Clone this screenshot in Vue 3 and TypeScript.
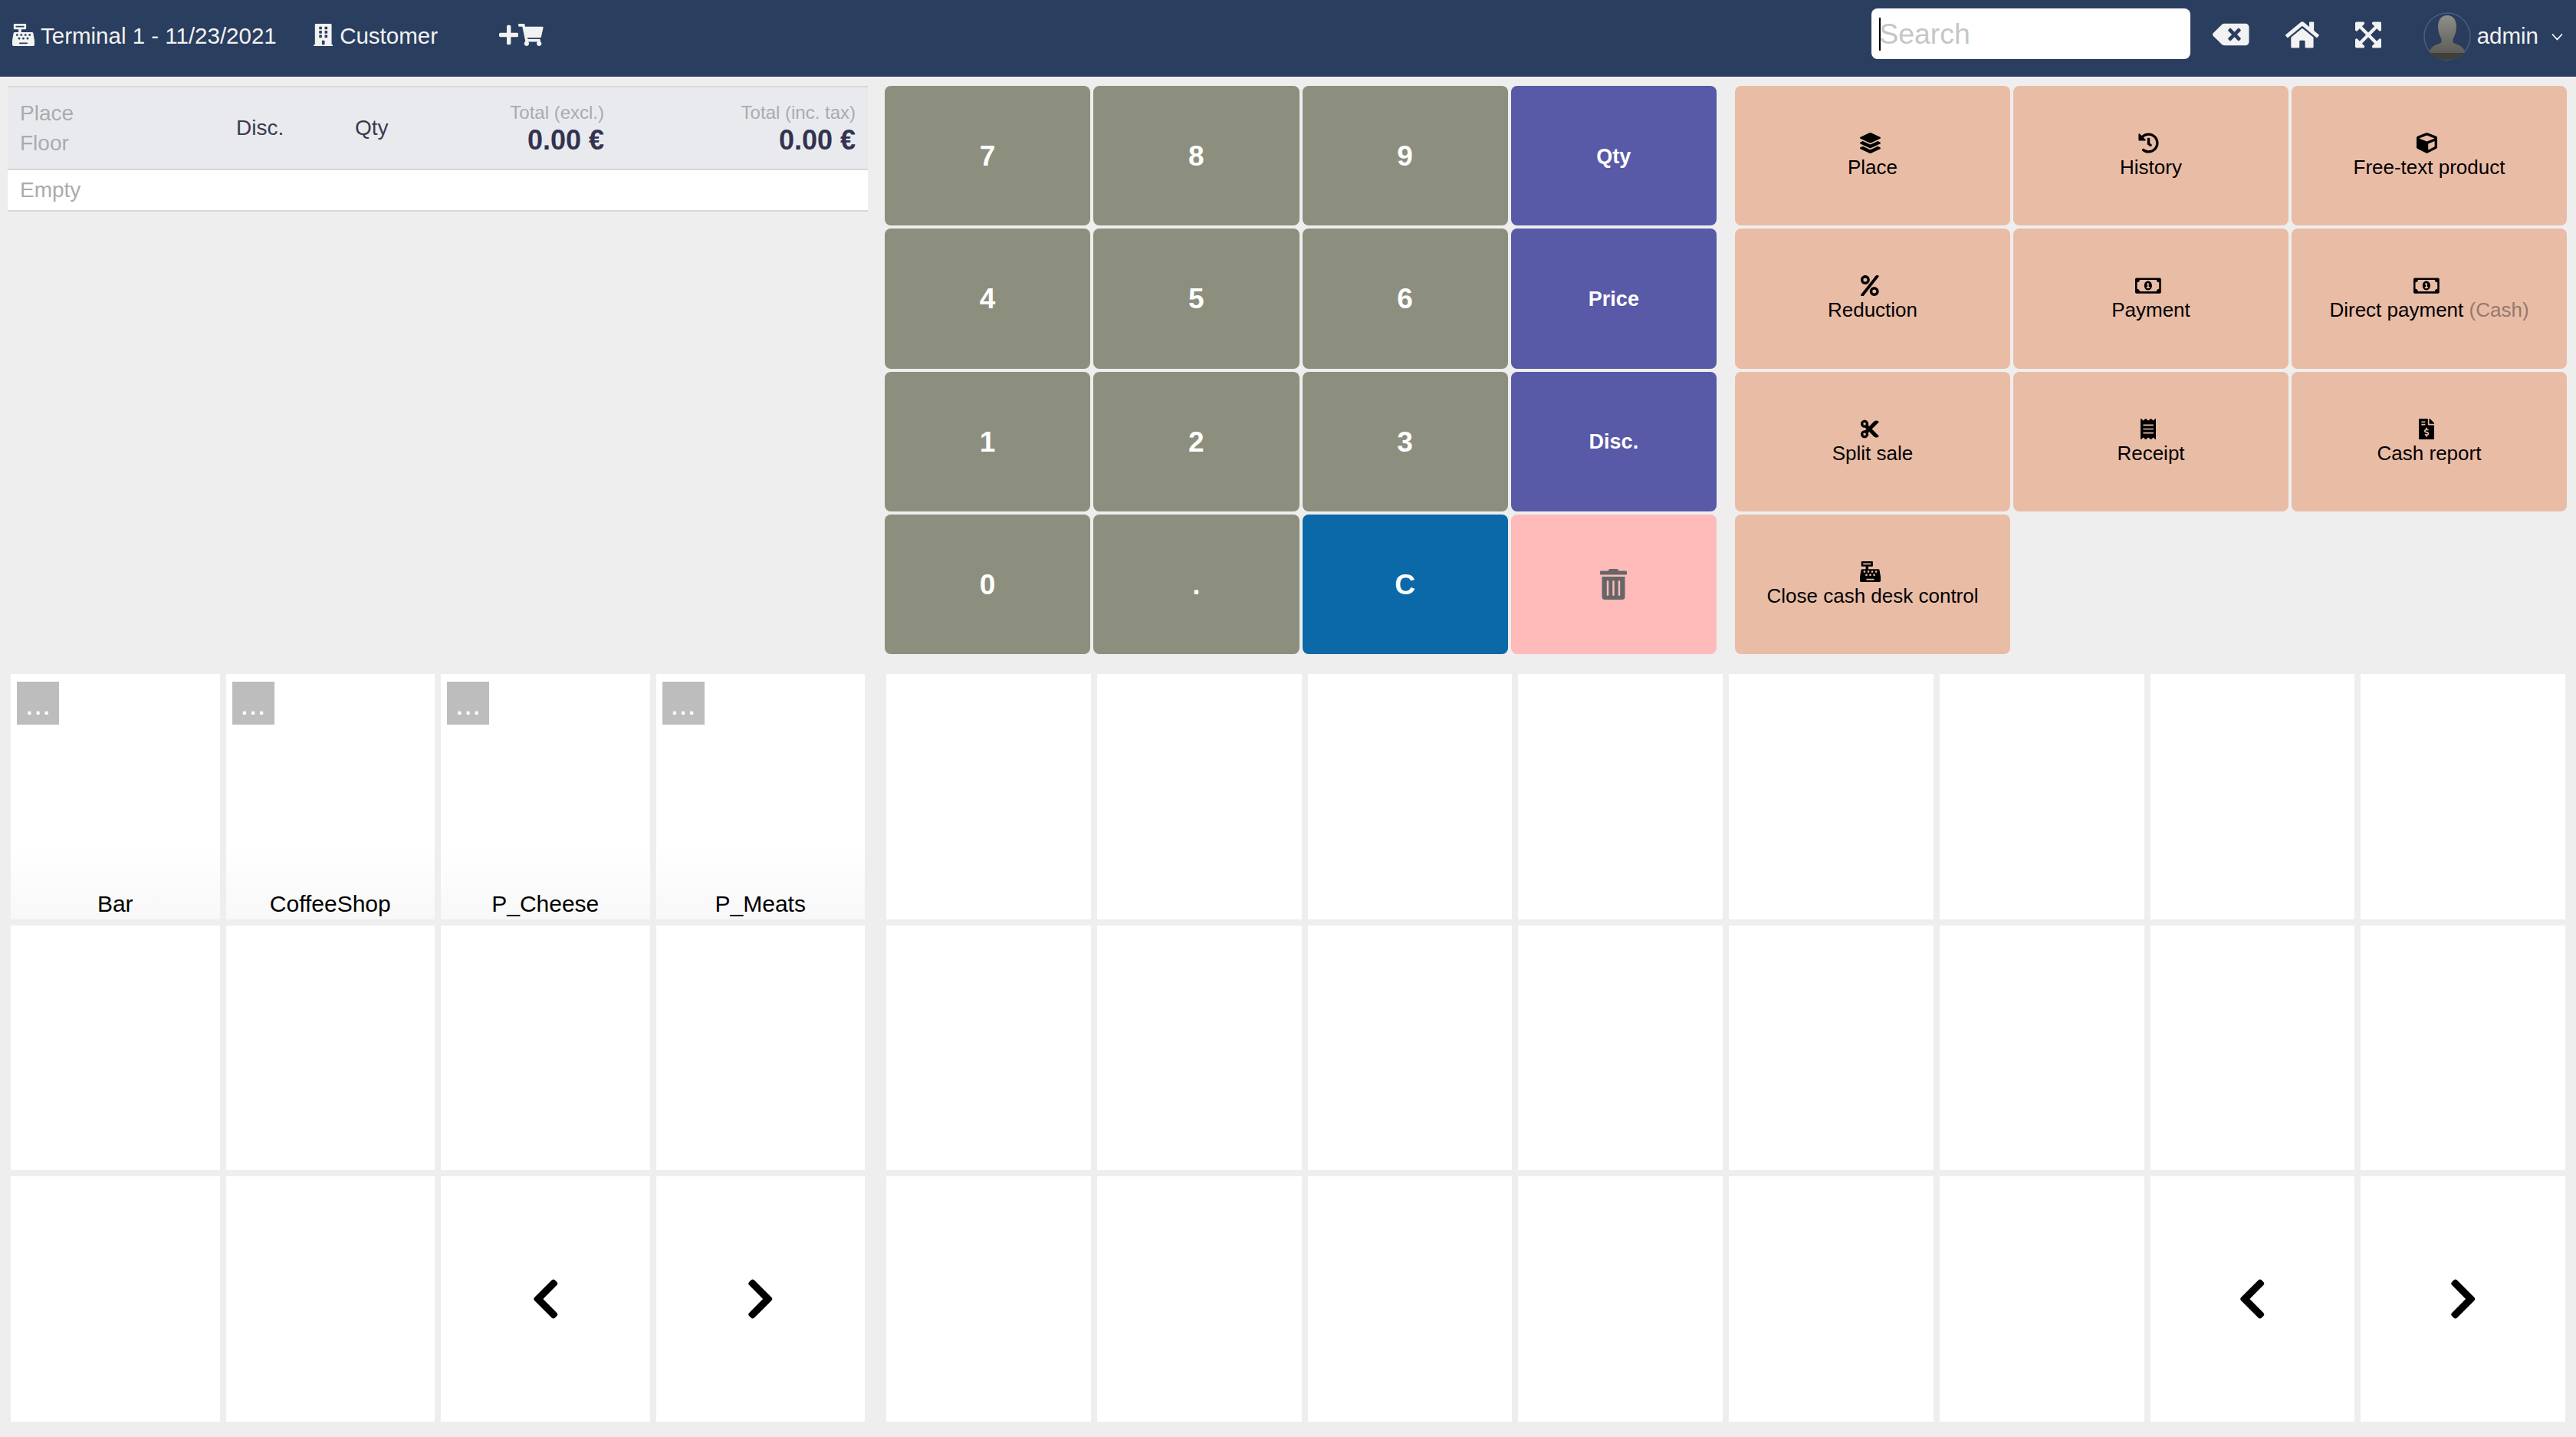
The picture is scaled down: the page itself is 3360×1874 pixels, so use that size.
<template>
  <div class="pos">
    <header class="topbar">
      <div class="crumb first">
        <svg class="i ic" :viewBox="icons.register.vb"><path :d="icons.register.d" /></svg>
        <span>Terminal 1 - 11/23/2021</span>
      </div>
      <div class="crumb customer">
        <svg class="i ic" :viewBox="icons.building.vb"><path :d="icons.building.d" /></svg>
        <span>Customer</span>
      </div>
      <div class="crumb newsale">
        <svg class="i ic" :viewBox="icons.plus.vb"><path :d="icons.plus.d" /></svg>
        <svg class="i ic" :viewBox="icons.cart.vb"><path :d="icons.cart.d" /></svg>
      </div>
      <div class="search">
        <input type="text" placeholder="Search" />
        <span class="caret"></span>
      </div>
      <svg class="i tool backspace" :viewBox="icons.backspace.vb"><path :d="icons.backspace.d" /></svg>
      <svg class="i tool home" :viewBox="icons.home.vb"><path :d="icons.home.d" /></svg>
      <svg class="i tool expand" :viewBox="icons.expand.vb"><path :d="icons.expand.d" /></svg>
      <svg class="avatar" viewBox="0 0 62 63">
        <defs>
          <linearGradient id="headfill" x1="0" y1="0" x2="0" y2="1">
            <stop offset="0" stop-color="#8e8e8a" />
            <stop offset="1" stop-color="#55554f" />
          </linearGradient>
        </defs>
        <ellipse cx="31" cy="31.5" rx="30" ry="30.5" fill="#2b3d5c" stroke="#4b5e7c" stroke-width="1.5" />
        <path d="M8 52c1-6 6-9 13-11 3-1 3-4 2-7-2-4-4-9-4-15 0-10 5-15 12-15s12 5 12 15c0 6-2 11-4 15-1 3-1 6 2 7 7 2 12 5 13 11-5 6-13 10-23 10S13 58 8 52z" fill="url(#headfill)" />
        <path d="M8 53h46c-5 6-13 9-23 9S13 59 8 53z" fill="#3f3f3b" />
      </svg>
      <span class="user">admin</span>
      <svg class="userchev" viewBox="0 0 15 10"><path d="M1 1.5l6.5 7 6.5-7" fill="none" stroke="#fff" stroke-width="1.8" /></svg>
    </header>

    <section class="upper">
      <div class="ticket">
        <div class="ticket-head">
          <div class="place"><div>Place</div><div>Floor</div></div>
          <div class="cell">Disc.</div>
          <div class="cell">Qty</div>
          <div class="total"><div class="total-label">Total (excl.)</div><div class="total-value">0.00 €</div></div>
          <div class="total"><div class="total-label">Total (inc. tax)</div><div class="total-value">0.00 €</div></div>
        </div>
        <div class="ticket-empty">Empty</div>
      </div>

      <div class="numpad">
        <button v-for="k in keys" :key="k.label" :class="['key', k.kind]">
          <svg v-if="k.kind === 'del'" class="i" :viewBox="icons.trash.vb"><path :d="icons.trash.d" /></svg>
          <template v-else>{{ k.label }}</template>
        </button>
      </div>

      <div class="actions">
        <button v-for="a in actions" :key="a.label" class="action">
          <svg class="i" :viewBox="icons[a.icon].vb"><path :d="icons[a.icon].d" /></svg>
          <span>{{ a.label }}<em v-if="a.note">{{ ' ' + a.note }}</em></span>
        </button>
      </div>
    </section>

    <section class="lower">
      <div class="tiles cats">
        <div v-for="(c, idx) in catTiles" :key="idx" :class="['tile', { named: c.name }]">
          <span v-if="c.name" class="more">...</span>
          <span v-if="c.name" class="tile-name">{{ c.name }}</span>
          <svg v-if="c.arrow" class="i chev" :viewBox="icons[c.arrow].vb"><path :d="icons[c.arrow].d" /></svg>
        </div>
      </div>
      <div class="tiles prods">
        <div v-for="(p, idx) in prodTiles" :key="idx" class="tile">
          <svg v-if="p" class="i chev" :viewBox="icons[p].vb"><path :d="icons[p].d" /></svg>
        </div>
      </div>
    </section>
  </div>
</template>

<script setup lang="ts">
const icons: Record<string, { vb: string; d: string }> = {
  register: { vb: '0 0 512 512', d: 'M511.1 378.8l-26.7-160c-2.6-15.4-15.9-26.7-31.6-26.7H208v-64h96c8.8 0 16-7.2 16-16V16c0-8.8-7.2-16-16-16H48c-8.8 0-16 7.2-16 16v96c0 8.8 7.2 16 16 16h96v64H59.1c-15.6 0-29 11.3-31.6 26.7L.8 378.7c-.6 3.5-.9 7-.9 10.5V480c0 17.7 14.3 32 32 32h448c17.7 0 32-14.3 32-32v-90.7c.1-3.5-.2-7-.8-10.5zM280 248c0-8.8 7.2-16 16-16h16c8.8 0 16 7.2 16 16v16c0 8.8-7.2 16-16 16h-16c-8.8 0-16-7.2-16-16v-16zm-32 64h16c8.8 0 16 7.2 16 16v16c0 8.8-7.2 16-16 16h-16c-8.8 0-16-7.2-16-16v-16c0-8.8 7.2-16 16-16zm-32-80c8.8 0 16 7.2 16 16v16c0 8.8-7.2 16-16 16h-16c-8.8 0-16-7.2-16-16v-16c0-8.8 7.2-16 16-16h16zM80 80V48h192v32H80zm40 200h-16c-8.8 0-16-7.2-16-16v-16c0-8.8 7.2-16 16-16h16c8.8 0 16 7.2 16 16v16c0 8.8-7.2 16-16 16zm16 64v-16c0-8.8 7.2-16 16-16h16c8.8 0 16 7.2 16 16v16c0 8.8-7.2 16-16 16h-16c-8.8 0-16-7.2-16-16zm216 112c0 4.4-3.6 8-8 8H168c-4.4 0-8-3.6-8-8v-16c0-4.4 3.6-8 8-8h176c4.4 0 8 3.6 8 8v16zm24-112c0 8.8-7.2 16-16 16h-16c-8.8 0-16-7.2-16-16v-16c0-8.8 7.2-16 16-16h16c8.8 0 16 7.2 16 16v16zm48-80c0 8.8-7.2 16-16 16h-16c-8.8 0-16-7.2-16-16v-16c0-8.8 7.2-16 16-16h16c8.8 0 16 7.2 16 16v16z' },
  building: { vb: '0 0 448 512', d: 'M436 480h-20V24c0-13.255-10.745-24-24-24H56C42.745 0 32 10.745 32 24v456H12c-6.627 0-12 5.373-12 12v20h448v-20c0-6.627-5.373-12-12-12zM128 76c0-6.627 5.373-12 12-12h40c6.627 0 12 5.373 12 12v40c0 6.627-5.373 12-12 12h-40c-6.627 0-12-5.373-12-12V76zm0 96c0-6.627 5.373-12 12-12h40c6.627 0 12 5.373 12 12v40c0 6.627-5.373 12-12 12h-40c-6.627 0-12-5.373-12-12v-40zm52 148h-40c-6.627 0-12-5.373-12-12v-40c0-6.627 5.373-12 12-12h40c6.627 0 12 5.373 12 12v40c0 6.627-5.373 12-12 12zm76 160h-64v-84c0-6.627 5.373-12 12-12h40c6.627 0 12 5.373 12 12v84zm64-172c0 6.627-5.373 12-12 12h-40c-6.627 0-12-5.373-12-12v-40c0-6.627 5.373-12 12-12h40c6.627 0 12 5.373 12 12v40zm0-96c0 6.627-5.373 12-12 12h-40c-6.627 0-12-5.373-12-12v-40c0-6.627 5.373-12 12-12h40c6.627 0 12 5.373 12 12v40zm0-96c0 6.627-5.373 12-12 12h-40c-6.627 0-12-5.373-12-12V76c0-6.627 5.373-12 12-12h40c6.627 0 12 5.373 12 12v40z' },
  plus: { vb: '0 0 448 512', d: 'M416 208H272V64c0-17.67-14.33-32-32-32h-32c-17.67 0-32 14.33-32 32v144H32c-17.67 0-32 14.33-32 32v32c0 17.67 14.33 32 32 32h144v144c0 17.67 14.33 32 32 32h32c17.67 0 32-14.33 32-32V304h144c17.67 0 32-14.33 32-32v-32c0-17.67-14.33-32-32-32z' },
  cart: { vb: '0 0 576 512', d: 'M528.12 301.319l47.273-208C578.806 78.301 567.391 64 551.99 64H159.208l-9.166-44.81C147.758 8.021 137.93 0 126.529 0H24C10.745 0 0 10.745 0 24v16c0 13.255 10.745 24 24 24h69.883l70.248 343.435C147.325 417.1 136 435.222 136 456c0 30.928 25.072 56 56 56s56-25.072 56-56c0-15.674-6.447-29.835-16.824-40h209.647C430.447 426.165 424 440.326 424 456c0 30.928 25.072 56 56 56s56-25.072 56-56c0-22.172-12.888-41.332-31.579-50.405l5.517-24.276c3.413-15.018-8.002-29.319-23.403-29.319H218.117l-6.545-32h293.145c11.206 0 20.92-7.754 23.403-18.681z' },
  backspace: { vb: '0 0 640 512', d: 'M576 64H205.26A63.97 63.97 0 0 0 160 82.75L9.37 233.37c-12.5 12.5-12.5 32.76 0 45.25L160 429.25c12 12 28.28 18.75 45.25 18.75H576c35.35 0 64-28.65 64-64V128c0-35.35-28.65-64-64-64zm-84.69 254.06c6.25 6.25 6.25 16.38 0 22.63l-22.62 22.62c-6.25 6.25-16.38 6.25-22.63 0L384 301.25l-62.06 62.06c-6.25 6.25-16.38 6.25-22.63 0l-22.62-22.62c-6.25-6.25-6.25-16.38 0-22.63L338.75 256l-62.06-62.06c-6.25-6.25-6.25-16.38 0-22.63l22.62-22.62c6.25-6.25 16.38-6.25 22.63 0L384 210.75l62.06-62.06c6.25-6.25 16.38-6.25 22.63 0l22.62 22.62c6.25 6.25 6.25 16.38 0 22.63L429.25 256l62.06 62.06z' },
  home: { vb: '0 0 576 512', d: 'M280.37 148.26L96 300.11V464a16 16 0 0 0 16 16l112.06-.29a16 16 0 0 0 15.92-16V368a16 16 0 0 1 16-16h64a16 16 0 0 1 16 16v95.64a16 16 0 0 0 16 16.05L464 480a16 16 0 0 0 16-16V300L295.67 148.26a12.19 12.19 0 0 0-15.3 0zM571.6 251.47L488 182.56V44.05a12 12 0 0 0-12-12h-56a12 12 0 0 0-12 12v72.61L318.47 43a48 48 0 0 0-61 0L4.34 251.47a12 12 0 0 0-1.6 16.9l25.5 31A12 12 0 0 0 45.15 301l235.22-193.74a12.19 12.19 0 0 1 15.3 0L530.9 301a12 12 0 0 0 16.9-1.6l25.5-31a12 12 0 0 0-1.7-16.93z' },
  expand: { vb: '0 0 448 512', d: 'M448 344v112a23.94 23.94 0 0 1-24 24H312c-21.39 0-32.09-25.9-17-41l36.2-36.2L224 295.6 116.77 402.9 153 439c15.09 15.1 4.39 41-17 41H24a23.94 23.94 0 0 1-24-24V344c0-21.4 25.89-32.1 41-17l36.19 36.2L184.46 256 77.18 148.7 41 185c-15.1 15.1-41 4.4-41-17V56a23.94 23.94 0 0 1 24-24h112c21.39 0 32.09 25.9 17 41l-36.2 36.2L224 216.4l107.23-107.3L295 73c-15.09-15.1-4.39-41 17-41h112a23.94 23.94 0 0 1 24 24v112c0 21.4-25.89 32.1-41 17l-36.19-36.2L263.54 256l107.28 107.3L407 327.1c15.1-15.2 41-4.5 41 16.9z' },
  trash: { vb: '0 0 448 512', d: 'M32 464a48 48 0 0 0 48 48h288a48 48 0 0 0 48-48V128H32zm272-256a16 16 0 0 1 32 0v224a16 16 0 0 1-32 0zm-96 0a16 16 0 0 1 32 0v224a16 16 0 0 1-32 0zm-96 0a16 16 0 0 1 32 0v224a16 16 0 0 1-32 0zM432 32H312l-9.4-18.7A24 24 0 0 0 281.1 0H166.8a23.72 23.72 0 0 0-21.4 13.3L136 32H16A16 16 0 0 0 0 48v32a16 16 0 0 0 16 16h416a16 16 0 0 0 16-16V48a16 16 0 0 0-16-16z' },
  layers: { vb: '0 0 512 512', d: 'M12.41 148.02l232.94 105.67c6.8 3.09 14.49 3.09 21.29 0l232.94-105.67c16.55-7.51 16.55-32.52 0-40.03L266.65 2.31a25.607 25.607 0 0 0-21.29 0L12.41 107.98c-16.55 7.51-16.55 32.53 0 40.04zm487.18 88.28l-58.09-26.33-161.64 73.27c-7.56 3.43-15.59 5.17-23.86 5.17s-16.29-1.74-23.86-5.17L70.51 209.97l-58.1 26.33c-16.55 7.5-16.55 32.5 0 40l232.94 105.59c6.8 3.08 14.49 3.08 21.29 0L499.59 276.3c16.55-7.5 16.55-32.5 0-40zm0 127.8l-57.87-26.23-161.86 73.37c-7.56 3.43-15.59 5.17-23.86 5.17s-16.29-1.74-23.86-5.17L70.29 337.87 12.41 364.1c-16.55 7.5-16.55 32.5 0 40l232.94 105.59c6.8 3.08 14.49 3.08 21.29 0L499.59 404.1c16.55-7.5 16.55-32.5 0-40z' },
  history: { vb: '0 0 512 512', d: 'M504 255.531c.253 136.64-111.18 248.372-247.82 248.468-59.015.042-113.223-20.53-155.822-54.911-11.077-8.94-11.905-25.541-1.839-35.607l11.267-11.267c8.609-8.609 22.353-9.551 31.891-1.984C173.062 425.135 212.781 440 256 440c101.705 0 184-82.311 184-184 0-101.705-82.311-184-184-184-48.814 0-93.149 18.969-126.068 49.932l50.754 50.754c10.08 10.08 2.941 27.314-11.313 27.314H24c-8.837 0-16-7.163-16-16V38.627c0-14.254 17.234-21.393 27.314-11.314l49.372 49.372C129.209 34.136 189.552 8 256 8c136.81 0 247.747 110.78 248 247.531zm-180.912 78.784l9.823-12.63c8.138-10.463 6.253-25.542-4.21-33.679L288 256.349V152c0-13.255-10.745-24-24-24h-16c-13.255 0-24 10.745-24 24v135.651l65.409 50.874c10.463 8.137 25.541 6.253 33.679-4.21z' },
  cube: { vb: '0 0 512 512', d: 'M239.1 6.3l-208 78c-18.7 7-31.1 25-31.1 45v225.1c0 18.2 10.3 34.8 26.5 42.9l208 104c13.5 6.8 29.4 6.8 42.9 0l208-104c16.3-8.1 26.5-24.8 26.5-42.9V129.3c0-20-12.4-37.9-31.1-44.9l-208-78C262 2.2 250 2.2 239.1 6.3zM256 68.4l192 72v1.1l-192 78-192-78v-1.1l192-72zm32 356V275.5l160-65v133.9l-160 80z' },
  percent: { vb: '0 0 448 512', d: 'M112 224c61.9 0 112-50.1 112-112S173.9 0 112 0 0 50.1 0 112s50.1 112 112 112zm0-160c26.5 0 48 21.5 48 48s-21.5 48-48 48-48-21.5-48-48 21.5-48 48-48zm224 224c-61.9 0-112 50.1-112 112s50.1 112 112 112 112-50.1 112-112-50.1-112-112-112zm0 160c-26.5 0-48-21.5-48-48s21.5-48 48-48 48 21.5 48 48-21.5 48-48 48zM392.3.2l31.6-.1c19.4-.1 30.9 21.8 19.7 37.8L77.4 501.6a23.95 23.95 0 0 1-19.6 10.2l-33.4.1c-19.5 0-30.9-21.9-19.7-37.8L372.7 10.2C377.2 4 384.5.2 392.3.2z' },
  money: { vb: '0 0 640 512', d: 'M320 144c-53.02 0-96 50.14-96 112 0 61.85 42.98 112 96 112 53 0 96-50.13 96-112 0-61.86-42.98-112-96-112zm40 168c0 4.42-3.58 8-8 8h-64c-4.42 0-8-3.58-8-8v-16c0-4.42 3.58-8 8-8h16v-55.44l-.47.31a7.992 7.992 0 0 1-11.09-2.22l-8.88-13.31a7.992 7.992 0 0 1 2.22-11.09l15.33-10.22a23.99 23.99 0 0 1 13.31-4.03H328c4.42 0 8 3.58 8 8v88h16c4.42 0 8 3.58 8 8v16zM608 64H32C14.33 64 0 78.33 0 96v320c0 17.67 14.33 32 32 32h576c17.67 0 32-14.33 32-32V96c0-17.67-14.33-32-32-32zm-16 272c-35.35 0-64 28.65-64 64H112c0-35.35-28.65-64-64-64V176c35.35 0 64-28.65 64-64h416c0 35.35 28.65 64 64 64v160z' },
  cut: { vb: '0 0 448 512', d: 'M278.06 256L444.48 89.57c4.69-4.69 4.69-12.29 0-16.97-32.8-32.8-85.99-32.8-118.79 0L210.18 188.12l-24.86-24.86c4.31-10.92 6.68-22.81 6.68-35.26 0-53.02-42.98-96-96-96S0 74.98 0 128s42.98 96 96 96c4.54 0 8.99-.32 13.36-.93L142.29 256l-32.93 32.93c-4.37-.61-8.83-.93-13.36-.93-53.02 0-96 42.98-96 96s42.98 96 96 96 96-42.98 96-96c0-12.45-2.37-24.34-6.68-35.26l24.86-24.86L325.69 439.4c32.8 32.8 85.99 32.8 118.79 0 4.69-4.68 4.69-12.28 0-16.97L278.06 256zM96 160c-17.64 0-32-14.36-32-32s14.36-32 32-32 32 14.36 32 32-14.36 32-32 32zm0 256c-17.64 0-32-14.36-32-32s14.36-32 32-32 32 14.36 32 32-14.36 32-32 32z' },
  receipt: { vb: '0 0 384 512', d: 'M358.4 3.2L320 48 265.6 3.2a15.9 15.9 0 0 0-19.2 0L192 48 137.6 3.2a15.9 15.9 0 0 0-19.2 0L64 48 25.6 3.2C15-4.7 0 2.8 0 16v480c0 13.2 15 20.7 25.6 12.8L64 464l54.4 44.8a15.9 15.9 0 0 0 19.2 0L192 464l54.4 44.8a15.9 15.9 0 0 0 19.2 0L320 464l38.4 44.8c10.5 7.9 25.6.4 25.6-12.8V16c0-13.2-15-20.7-25.6-12.8zM320 360c0 4.4-3.6 8-8 8H72c-4.4 0-8-3.6-8-8v-16c0-4.4 3.6-8 8-8h240c4.4 0 8 3.6 8 8v16zm0-96c0 4.4-3.6 8-8 8H72c-4.4 0-8-3.6-8-8v-16c0-4.4 3.6-8 8-8h240c4.4 0 8 3.6 8 8v16zm0-96c0 4.4-3.6 8-8 8H72c-4.4 0-8-3.6-8-8v-16c0-4.4 3.6-8 8-8h240c4.4 0 8 3.6 8 8v16z' },
  invoice: { vb: '0 0 384 512', d: 'M377 105L279.1 7c-4.5-4.5-10.6-7-17-7H256v128h128v-6.1c0-6.3-2.5-12.4-7-16.9zm-153 31V0H24C10.7 0 0 10.7 0 24v464c0 13.3 10.7 24 24 24h336c13.3 0 24-10.7 24-24V160H248c-13.2 0-24-10.8-24-24zM64 72c0-4.42 3.58-8 8-8h80c4.42 0 8 3.58 8 8v16c0 4.42-3.58 8-8 8H72c-4.42 0-8-3.58-8-8V72zm0 80v-16c0-4.42 3.58-8 8-8h80c4.42 0 8 3.58 8 8v16c0 4.42-3.58 8-8 8H72c-4.42 0-8-3.58-8-8zm144 263.88V440c0 4.42-3.58 8-8 8h-16c-4.42 0-8-3.58-8-8v-24.29c-11.29-.58-22.27-4.52-31.37-11.35-3.9-2.93-4.1-8.77-.57-12.14l11.75-11.21c2.77-2.64 6.89-2.76 10.13-.73 3.87 2.42 8.26 3.72 12.82 3.72h28.11c6.5 0 11.8-5.92 11.8-13.19 0-5.95-3.61-11.19-8.77-12.73l-45-13.5c-18.59-5.58-31.58-23.42-31.58-43.39 0-24.52 19.05-44.44 42.67-45.07V232c0-4.42 3.58-8 8-8h16c4.42 0 8 3.58 8 8v24.29c11.29.58 22.27 4.51 31.37 11.35 3.9 2.93 4.1 8.77.57 12.14l-11.75 11.21c-2.77 2.64-6.89 2.76-10.13.73-3.87-2.43-8.26-3.72-12.82-3.72h-28.11c-6.5 0-11.8 5.92-11.8 13.19 0 5.95 3.61 11.19 8.77 12.73l45 13.5c18.59 5.58 31.58 23.42 31.58 43.39 0 24.53-19.05 44.44-42.67 45.07z' },
  left: { vb: '0 0 320 512', d: 'M34.52 239.03L228.87 44.69c9.37-9.37 24.57-9.37 33.94 0l22.67 22.67c9.36 9.36 9.37 24.52.04 33.9L131.49 256l154.02 154.75c9.34 9.38 9.32 24.54-.04 33.9l-22.67 22.67c-9.37 9.37-24.57 9.37-33.94 0L34.52 272.97c-9.37-9.37-9.37-24.57 0-33.94z' },
  right: { vb: '0 0 320 512', d: 'M285.476 272.971L91.132 467.314c-9.373 9.373-24.569 9.373-33.941 0l-22.667-22.667c-9.357-9.357-9.375-24.522-.04-33.901L188.505 256 34.484 101.255c-9.335-9.379-9.317-24.544.04-33.901l22.667-22.667c9.373-9.373 24.569-9.373 33.941 0L285.475 239.03c9.373 9.372 9.373 24.568.001 33.941z' }
}

const keys = [
  { label: '7', kind: 'num' }, { label: '8', kind: 'num' }, { label: '9', kind: 'num' }, { label: 'Qty', kind: 'mode' },
  { label: '4', kind: 'num' }, { label: '5', kind: 'num' }, { label: '6', kind: 'num' }, { label: 'Price', kind: 'mode' },
  { label: '1', kind: 'num' }, { label: '2', kind: 'num' }, { label: '3', kind: 'num' }, { label: 'Disc.', kind: 'mode' },
  { label: '0', kind: 'num' }, { label: '.', kind: 'num' }, { label: 'C', kind: 'clear' }, { label: 'del', kind: 'del' }
]

const actions = [
  { label: 'Place', icon: 'layers' },
  { label: 'History', icon: 'history' },
  { label: 'Free-text product', icon: 'cube' },
  { label: 'Reduction', icon: 'percent' },
  { label: 'Payment', icon: 'money' },
  { label: 'Direct payment', note: '(Cash)', icon: 'money' },
  { label: 'Split sale', icon: 'cut' },
  { label: 'Receipt', icon: 'receipt' },
  { label: 'Cash report', icon: 'invoice' },
  { label: 'Close cash desk control', icon: 'register' }
]

const catTiles: { name?: string; arrow?: string }[] = [
  { name: 'Bar' }, { name: 'CoffeeShop' }, { name: 'P_Cheese' }, { name: 'P_Meats' },
  {}, {}, {}, {},
  {}, {}, { arrow: 'left' }, { arrow: 'right' }
]

const prodTiles: string[] = Array.from({ length: 24 }, (_, i) =>
  i === 22 ? 'left' : i === 23 ? 'right' : ''
)
</script>

<style scoped>
.pos {
  width: 3360px;
  height: 1874px;
  overflow: hidden;
  background: #eeeeee;
  font-family: "Liberation Sans", Arial, sans-serif;
  color: #000;
}
.i {
  display: block;
  height: 1em;
  width: auto;
  fill: currentColor;
  flex: none;
}

/* top bar */
.topbar {
  box-sizing: border-box;
  height: 100px;
  padding: 0 17px 6px 16px;
  display: flex;
  align-items: center;
  background: #2a3e5f;
  color: #f2f2f2;
  font-size: 29.5px;
}
.crumb {
  display: flex;
  align-items: center;
}
.crumb .i {
  font-size: 29px;
}
.crumb span {
  margin-left: 8px;
}
.ic {
  margin-bottom: 3px;
}
.customer {
  margin-left: 48px;
}
.customer span {
  margin-left: 9px;
}
.newsale {
  margin-left: 80px;
}
.search {
  position: relative;
  margin-left: auto;
  margin-bottom: 6px;
}
.search input {
  display: block;
  box-sizing: border-box;
  width: 416px;
  height: 66px;
  padding: 0 0 0 10px;
  border: none;
  outline: none;
  border-radius: 8px;
  background: #fff;
  font-family: inherit;
  font-size: 37.5px;
}
.search input::placeholder {
  color: #c6c6c6;
  opacity: 1;
}
.caret {
  position: absolute;
  left: 10px;
  top: 12px;
  width: 2px;
  height: 43px;
  background: #000;
}
.tool {
  margin-bottom: 4px;
  font-size: 39px;
}
.backspace {
  margin-left: 29px;
  font-size: 38px;
}
.home {
  margin-left: 47px;
}
.expand {
  margin-left: 47px;
}
.avatar {
  display: block;
  flex: none;
  width: 62px;
  height: 63px;
  margin-left: 55px;
}
.user {
  margin-left: 8px;
}
.userchev {
  display: block;
  flex: none;
  width: 15px;
  height: 10px;
  margin-left: 17px;
  margin-top: 2px;
}

/* upper area */
.upper {
  display: flex;
  padding: 12px 12px 0 10px;
  height: 741px;
}
.ticket {
  width: 1122px;
  flex: none;
}
.ticket-head {
  box-sizing: border-box;
  height: 110px;
  padding: 0 16px;
  display: grid;
  grid-template-columns: 282px 155px 100px 225px 1fr;
  align-items: center;
  background: #e9eaee;
  border-top: 2px solid #d8d8d8;
  border-bottom: 2px solid #d8d8d8;
  color: #3a3a4e;
  font-size: 28px;
}
.place {
  color: #a9abb0;
  line-height: 39px;
}
.total {
  text-align: right;
  padding-top: 2px;
}
.total-label {
  color: #a9abb0;
  font-size: 24px;
  line-height: 30px;
}
.total-value {
  color: #33334f;
  font-size: 36px;
  font-weight: 700;
  line-height: 42px;
}
.ticket-empty {
  height: 52px;
  padding-left: 16px;
  background: #fff;
  border-bottom: 2px solid #d8d8d8;
  color: #a9abb0;
  font-size: 28px;
  line-height: 52px;
}
.numpad {
  width: 1085px;
  flex: none;
  margin-left: 22px;
  display: grid;
  grid-template-columns: repeat(4, 1fr);
  grid-template-rows: repeat(4, 1fr);
  gap: 4px;
}
.key {
  border: none;
  padding: 0;
  border-radius: 8px;
  display: flex;
  align-items: center;
  justify-content: center;
  font-family: inherit;
  font-weight: 700;
  color: #fff;
}
.num {
  background: #8c8f7d;
  font-size: 37px;
  padding-top: 2px;
}
.mode {
  background: #5859a7;
  font-size: 27px;
  padding-top: 2px;
}
.clear {
  background: #0b69a8;
  font-size: 37px;
  padding-top: 2px;
}
.del {
  background: #ffbaba;
  color: #666666;
  font-size: 40px;
}
.actions {
  width: 1085px;
  flex: none;
  margin-left: 24px;
  display: grid;
  grid-template-columns: repeat(3, 1fr);
  grid-template-rows: repeat(4, 1fr);
  gap: 4px;
}
.action {
  border: none;
  padding: 0;
  border-radius: 8px;
  background: #e9bca6;
  display: flex;
  flex-direction: column;
  align-items: center;
  justify-content: center;
  font-family: inherit;
  font-size: 26px;
  line-height: 30px;
  color: #000;
}
.action .i {
  font-size: 27px;
  margin: 0 7px 3px 0;
}
.action em {
  font-style: normal;
  color: #93796c;
}

/* lower area */
.lower {
  display: flex;
  gap: 28px;
  padding: 26px 14px 0;
}
.tiles {
  display: grid;
  grid-template-rows: repeat(3, 1fr);
  gap: 8px;
  height: 975px;
}
.cats {
  width: 1114px;
  flex: none;
  grid-template-columns: repeat(4, 1fr);
}
.prods {
  flex: 1;
  grid-template-columns: repeat(8, 1fr);
}
.tile {
  position: relative;
  display: flex;
  align-items: center;
  justify-content: center;
  background: #fff;
}
.tile.named {
  align-items: flex-end;
  background: linear-gradient(to bottom, #ffffff 70%, #f8f8f8 100%);
}
.more {
  position: absolute;
  left: 8px;
  top: 10px;
  width: 55px;
  height: 56px;
  background: #bdbdbd;
  color: #fff;
  font-size: 40px;
  line-height: 58px;
  text-align: center;
}
.tile-name {
  font-size: 30px;
  line-height: 34px;
  margin-bottom: 3px;
}
.chev {
  font-size: 60px;
}
</style>

<style>
html,
body {
  margin: 0;
  background: #eeeeee;
}
</style>
